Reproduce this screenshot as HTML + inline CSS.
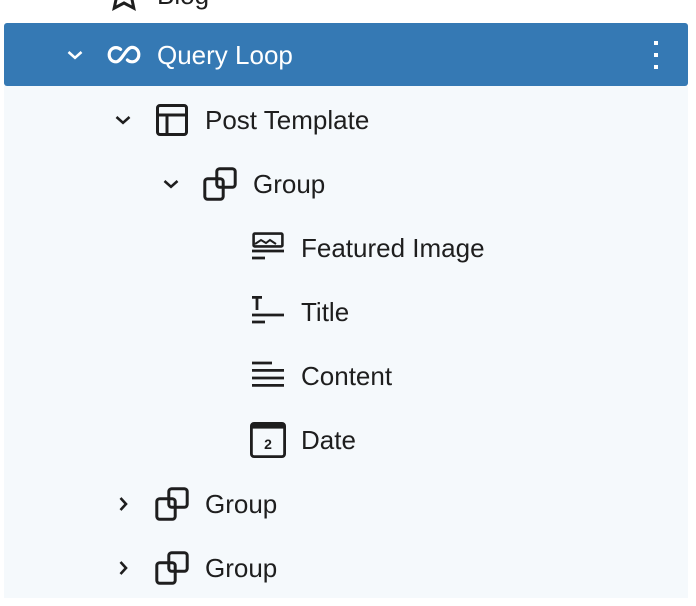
<!DOCTYPE html>
<html><head><meta charset="utf-8"><style>
html,body{margin:0;padding:0;background:#fff;width:696px;height:606px;overflow:hidden;font-family:"Liberation Sans",sans-serif;}
.bg{position:absolute;left:4px;top:86px;width:684px;height:512px;background:#f5f9fc;}
.sel{position:absolute;left:4px;top:23px;width:684px;height:63px;background:#3579b4;border-radius:3px;}
.row{position:absolute;height:64px;left:0;width:696px;}
.t{position:absolute;top:0;line-height:64px;font-size:26px;color:#1e1e1e;white-space:nowrap;}
svg{position:absolute;}
.w .t{color:#fff}
</style></head><body>
<div class="bg"></div>
<div class="sel"></div>

<div class="row" style="top:-37px">
<svg style="left:100px;top:8px" width="48" height="48" viewBox="0 0 24 24"><path d="M12 4l2.4 5 5.4.6-4 3.7 1.1 5.3L12 16l-4.9 2.6 1.1-5.3-4-3.7 5.4-.6z" fill="none" stroke="#1e1e1e" stroke-width="1.5"/></svg>
<div class="t" style="left:157px">Blog</div>
</div>

<div class="row w" style="top:23px">
<svg style="left:63px;top:20px" width="24" height="24" viewBox="0 0 24 24"><path d="M5.5 9L12 14.8 18.5 9" fill="none" stroke="#fff" stroke-width="2.6"/></svg>
<svg style="left:100px;top:8px" width="48" height="48" viewBox="0 0 24 24"><path d="M10.3 9.2C9.7 8.6 8.9 8.3 8 8.3c-2 0-3.4 1.6-3.4 3.6S6 15.4 8 15.4c2.9 0 4.9-7.2 8-7.2 2 0 3.4 1.6 3.4 3.6S18 15.4 16 15.4c-.9 0-1.7-.3-2.3-.9" fill="none" stroke="#fff" stroke-width="1.6" stroke-linecap="round"/></svg>
<div class="t" style="left:157px">Query Loop</div>
<div style="position:absolute;left:654px;top:18px;width:4px;height:4px;background:#fff"></div>
<div style="position:absolute;left:654px;top:30px;width:4px;height:4px;background:#fff"></div>
<div style="position:absolute;left:654px;top:42px;width:4px;height:4px;background:#fff"></div>
</div>

<div class="row" style="top:88px">
<svg style="left:111px;top:20px" width="24" height="24" viewBox="0 0 24 24"><path d="M5.5 9L12 14.8 18.5 9" fill="none" stroke="#1e1e1e" stroke-width="2.6"/></svg>
<svg style="left:148px;top:8px" width="48" height="48" viewBox="0 0 24 24"><rect x="4.75" y="4.75" width="14.5" height="14.5" rx="1.2" fill="none" stroke="#1e1e1e" stroke-width="1.5"/><path d="M4.75 9.5h14.5M9.5 9.5v9.75" stroke="#1e1e1e" stroke-width="1.5"/></svg>
<div class="t" style="left:205px">Post Template</div>
</div>

<div class="row" style="top:152px">
<svg style="left:159px;top:20px" width="24" height="24" viewBox="0 0 24 24"><path d="M5.5 9L12 14.8 18.5 9" fill="none" stroke="#1e1e1e" stroke-width="2.6"/></svg>
<svg style="left:196px;top:8px" width="48" height="48" viewBox="0 0 24 24"><rect x="4.4" y="9.4" width="9.2" height="10.2" rx="1.4" fill="none" stroke="#1e1e1e" stroke-width="1.5"/><rect x="10.4" y="4.4" width="9.2" height="9.2" rx="1.4" fill="none" stroke="#1e1e1e" stroke-width="1.5"/></svg>
<div class="t" style="left:253px">Group</div>
</div>

<div class="row" style="top:216px">
<svg style="left:244px;top:8px" width="48" height="48" viewBox="0 0 24 24"><rect x="4.8" y="4.8" width="14.4" height="6.4" rx=".6" fill="none" stroke="#1e1e1e" stroke-width="1.3"/><path d="M5.5 10l3-2 2.5 1.5 2-1.5 3 2" fill="none" stroke="#1e1e1e" stroke-width="1"/><path d="M4 13.5h16M4 17h6.5" stroke="#1e1e1e" stroke-width="1.4"/></svg>
<div class="t" style="left:301px">Featured Image</div>
</div>

<div class="row" style="top:280px">
<svg style="left:244px;top:8px" width="48" height="48" viewBox="0 0 24 24"><path d="M4 4.7h5M6.5 4.7v6.3" stroke="#1e1e1e" stroke-width="1.4"/><path d="M4 13.5h16M4 17h6.5" stroke="#1e1e1e" stroke-width="1.4"/></svg>
<div class="t" style="left:301px">Title</div>
</div>

<div class="row" style="top:344px">
<svg style="left:244px;top:8px" width="48" height="48" viewBox="0 0 24 24"><path d="M4 5.5h10M4 9.2h16M4 13h16M4 16.7h16" stroke="#1e1e1e" stroke-width="1.4"/></svg>
<div class="t" style="left:301px">Content</div>
</div>

<div class="row" style="top:408px">
<svg style="left:244px;top:8px" width="48" height="48" viewBox="0 0 24 24"><rect x="3.7" y="3.7" width="16.6" height="16.6" rx="1.3" fill="none" stroke="#1e1e1e" stroke-width="1.4"/><rect x="3.7" y="3.7" width="16.6" height="2.6" fill="#1e1e1e"/><text x="12" y="16.5" font-family="Liberation Sans,sans-serif" font-size="7" font-weight="bold" text-anchor="middle" fill="#1e1e1e">2</text></svg>
<div class="t" style="left:301px">Date</div>
</div>

<div class="row" style="top:472px">
<svg style="left:111px;top:20px" width="24" height="24" viewBox="0 0 24 24"><path d="M9.5 6L15 12 9.5 18" fill="none" stroke="#1e1e1e" stroke-width="2.6"/></svg>
<svg style="left:148px;top:8px" width="48" height="48" viewBox="0 0 24 24"><rect x="4.4" y="9.4" width="9.2" height="10.2" rx="1.4" fill="none" stroke="#1e1e1e" stroke-width="1.5"/><rect x="10.4" y="4.4" width="9.2" height="9.2" rx="1.4" fill="none" stroke="#1e1e1e" stroke-width="1.5"/></svg>
<div class="t" style="left:205px">Group</div>
</div>

<div class="row" style="top:536px">
<svg style="left:111px;top:20px" width="24" height="24" viewBox="0 0 24 24"><path d="M9.5 6L15 12 9.5 18" fill="none" stroke="#1e1e1e" stroke-width="2.6"/></svg>
<svg style="left:148px;top:8px" width="48" height="48" viewBox="0 0 24 24"><rect x="4.4" y="9.4" width="9.2" height="10.2" rx="1.4" fill="none" stroke="#1e1e1e" stroke-width="1.5"/><rect x="10.4" y="4.4" width="9.2" height="9.2" rx="1.4" fill="none" stroke="#1e1e1e" stroke-width="1.5"/></svg>
<div class="t" style="left:205px">Group</div>
</div>
</body></html>
